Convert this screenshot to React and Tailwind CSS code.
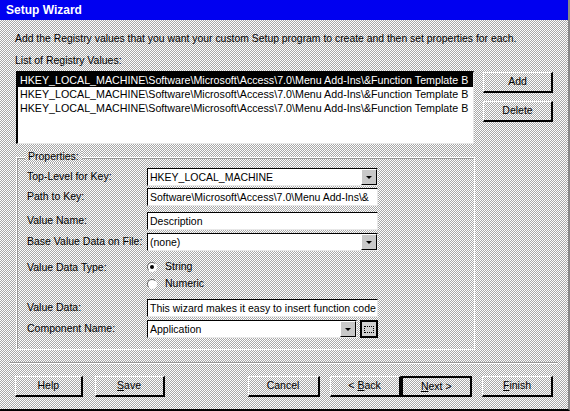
import React from "react";

const font = "font-['Liberation_Sans',Arial,sans-serif]";
const checker = "bg-[repeating-conic-gradient(#a8a8a8_0%_25%,#ffffff_0%_50%)] bg-[length:2px_2px]";

function Btn({ children, w = "w-[70px]", def = false }) {
  return (
    <div
      className={`${w} h-[21px] flex items-center justify-center text-[10.5px] text-black ${
        def
          ? "border-2 border-black"
          : "border-t border-l border-white border-r-2 border-b-2 border-r-black border-b-black"
      }`}
    >
      {children}
    </div>
  );
}

function Arrow() {
  return (
    <div className="w-[16px] h-full flex items-center justify-center border-t border-l border-white border-r border-b border-r-black border-b-black bg-[#c8c8c8]">
      <div className="w-0 h-0 border-l-[3px] border-r-[3px] border-t-[3px] border-l-transparent border-r-transparent border-t-black" />
    </div>
  );
}

function Field({ children, combo = false, w = "w-[231px]" }) {
  return (
    <div className={`${w} h-[18px] flex items-stretch bg-white border-t border-l border-black border-r border-b border-r-[#e8e8e8] border-b-[#e8e8e8]`}>
      <div className="flex-1 overflow-hidden whitespace-nowrap text-[10.5px] leading-[16px] pl-[2px] text-black">
        {children}
      </div>
      {combo && <Arrow />}
    </div>
  );
}

function Row({ label, children, mt }) {
  return (
    <div className={`flex items-center ${mt}`}>
      <div className="w-[120px] text-[10.5px] text-black whitespace-nowrap">{label}</div>
      {children}
    </div>
  );
}

function Radio({ checked, label }) {
  return (
    <div className="flex items-center gap-[8px] h-[14px]">
      <div className="w-[10px] h-[10px] rounded-full bg-white border border-t-[#666] border-l-[#666] border-r-white border-b-white flex items-center justify-center">
        {checked && <div className="w-[4px] h-[4px] rounded-full bg-black" />}
      </div>
      <span className="text-[10.5px] text-black">{label}</span>
    </div>
  );
}

export default function App() {
  const path = "HKEY_LOCAL_MACHINE\\Software\\Microsoft\\Access\\7.0\\Menu Add-Ins\\&Function Template B";
  return (
    <div
      className={`${font} w-[570px] h-[411px] overflow-hidden flex flex-col ${checker} border-b-2 border-b-black border-r-2 border-r-[#888]`}
    >
      <div className="h-[20px] bg-[#0000f0] flex items-center pl-[6px]">
        <span className="text-white font-bold text-[12px]">Setup Wizard</span>
      </div>

      <div className="flex flex-col px-[15px]">
        <div className="mt-[12px] text-[10.4px] leading-[13px] text-black whitespace-nowrap">
          Add the Registry values that you want your custom Setup program to create and then set properties for each.
        </div>
        <div className="mt-[9px] text-[10.5px] leading-[13px] text-black">List of Registry Values:</div>

        <div className="flex mt-[4px]">
          <div className="ml-[1px] w-[459px] h-[73px] bg-white border-t-2 border-l-2 border-black border-r border-b border-r-[#e8e8e8] border-b-[#e8e8e8] overflow-hidden">
            {[0, 1, 2].map((i) => (
              <div
                key={i}
                className={`h-[14px] text-[10.7px] leading-[14px] whitespace-nowrap pl-[2px] ${
                  i === 0 ? "bg-black text-white" : "text-black"
                }`}
              >
                {path}
              </div>
            ))}
          </div>
          <div className="ml-[9px] flex flex-col gap-[8px] mt-[1px]">
            <Btn>Add</Btn>
            <Btn>Delete</Btn>
          </div>
        </div>

        <div className="relative mt-[13px] ml-[1px] w-[459px] h-[193px] border border-white shadow-[inset_1px_1px_0_#999]">
          <div className={`absolute -top-[8px] left-[8px] px-[3px] text-[10.5px] leading-[13px] text-black ${checker}`}>
            Properties:
          </div>
          <div className="flex flex-col pl-[10px] pt-[10px]">
            <Row label="Top-Level for Key:">
              <Field combo>HKEY_LOCAL_MACHINE</Field>
            </Row>
            <Row label="Path to Key:" mt="mt-[2px]">
              <Field>Software\Microsoft\Access\7.0\Menu Add-Ins\&amp;</Field>
            </Row>
            <Row label="Value Name:" mt="mt-[6px]">
              <Field>Description</Field>
            </Row>
            <Row label="Base Value Data on File:" mt="mt-[3px]">
              <Field combo>(none)</Field>
            </Row>
            <div className="flex mt-[9px]">
              <div className="w-[120px] text-[10.5px] leading-[14px] text-black">Value Data Type:</div>
              <div className="flex flex-col gap-[3px]">
                <Radio checked label="String" />
                <Radio label="Numeric" />
              </div>
            </div>
            <Row label="Value Data:" mt="mt-[8px]">
              <Field>This wizard makes it easy to insert function code</Field>
            </Row>
            <Row label="Component Name:" mt="mt-[3px]">
              <Field combo w="w-[210px]">Application</Field>
              <div className="ml-[3px] w-[18px] h-[18px] border-2 border-black flex items-center justify-center bg-[#d0d0d0]">
                <div className="w-[10px] h-[7px] border border-dotted border-black" />
              </div>
            </Row>
          </div>
        </div>
      </div>

      <div className="mt-[12px] mx-[10px] h-[2px] border-t border-[#999] border-b border-b-white" />

      <div className="flex mt-[12px] px-[15px]">
        <Btn w="w-[69px]">Help</Btn>
        <div className="ml-[12px]">
          <Btn w="w-[70px]">
            <span className="underline">S</span>ave
          </Btn>
        </div>
        <div className="ml-[83px]">
          <Btn w="w-[72px]">Cancel</Btn>
        </div>
        <div className="ml-[10px]">
          <Btn w="w-[71px]">
            &lt; <span className="underline ml-[3px]">B</span>ack
          </Btn>
        </div>
        <Btn w="w-[73px]" def>
          <span className="underline">N</span>ext &gt;
        </Btn>
        <div className="ml-[10px]">
          <Btn w="w-[71px]">
            <span className="underline">F</span>inish
          </Btn>
        </div>
      </div>
    </div>
  );
}
